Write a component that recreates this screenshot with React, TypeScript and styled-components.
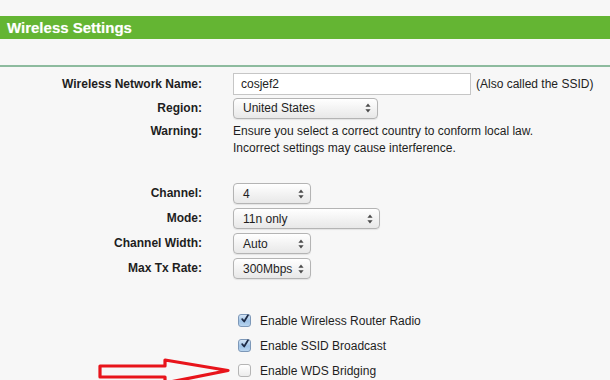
import styled, { createGlobalStyle } from "styled-components";

const GlobalStyle = createGlobalStyle`
  html, body {
    margin: 0;
    padding: 0;
    background: #f7f7f7;
    overflow: hidden;
  }
  body {
    font-family: "Liberation Sans", Arial, Helvetica, sans-serif;
    color: #1c1c1c;
  }
`;

type SelectField = {
  label: string;
  value: string;
  width: number;
};

const radioSelects: SelectField[] = [
  { label: "Channel:", value: "4", width: 78 },
  { label: "Mode:", value: "11n only", width: 147 },
  { label: "Channel Width:", value: "Auto", width: 78 },
  { label: "Max Tx Rate:", value: "300Mbps", width: 78 },
];

const checks = [
  { title: "Enable Wireless Router Radio", checked: true },
  { title: "Enable SSID Broadcast", checked: true },
  { title: "Enable WDS Bridging", checked: false },
];

function Select({ value, width }: { value: string; width: number }) {
  return (
    <StyledSelect $width={width}>
      <span>{value}</span>
      <svg width="6" height="10" viewBox="0 0 6 10">
        <path d="M3 0.5 L5.6 3.8 L0.4 3.8 Z" fill="#4a4a4a" />
        <path d="M3 9.5 L5.6 6.2 L0.4 6.2 Z" fill="#4a4a4a" />
      </svg>
    </StyledSelect>
  );
}

function Checkbox({ checked }: { checked: boolean }) {
  return (
    <StyledCheck $checked={checked}>
      {checked && (
        <svg width="12" height="12" viewBox="0 0 12 12">
          <path
            d="M2.6 6.2 L5 9 L9.6 1.6"
            fill="none"
            stroke="#1d2a44"
            strokeWidth="2.1"
            strokeLinecap="round"
            strokeLinejoin="round"
          />
        </svg>
      )}
    </StyledCheck>
  );
}

export default function App() {
  return (
    <Page>
      <GlobalStyle />
      <Header>Wireless Settings</Header>
      <Separator />
      <Form>
        <Row $height={22} $top={6}>
          <Label>Wireless Network Name:</Label>
          <Value>
            <TextInput>cosjef2</TextInput>
            <Hint>(Also called the SSID)</Hint>
          </Value>
        </Row>
        <Row $height={22} $top={2}>
          <Label>Region:</Label>
          <Value>
            <Select value="United States" width={145} />
          </Value>
        </Row>
        <Row $height={34} $top={4} $start>
          <Label>Warning:</Label>
          <Warning>
            Ensure you select a correct country to conform local law.
            <br />
            Incorrect settings may cause interference.
          </Warning>
        </Row>
        {radioSelects.map((f, i) => (
          <Row key={f.label} $height={21} $top={i === 0 ? 26 : 4}>
            <Label>{f.label}</Label>
            <Value>
              <Select value={f.value} width={f.width} />
            </Value>
          </Row>
        ))}
        {checks.map((c, i) => (
          <Row key={c.title} $height={25} $top={i === 0 ? 29 : 0}>
            <span />
            <Value>
              <Checkbox checked={c.checked} />
              <CheckText>{c.title}</CheckText>
            </Value>
          </Row>
        ))}
      </Form>
      <Arrow width="140" height="30" viewBox="0 0 140 30">
        <path
          d="M2 10 L67 10 L67 4 L130 14.5 L67 27 L67 21 L2 21 Z"
          fill="none"
          stroke="#e8141b"
          strokeWidth="3.2"
          strokeLinejoin="round"
        />
      </Arrow>
    </Page>
  );
}

const Page = styled.div`
  position: relative;
  width: 610px;
  height: 380px;
  padding-top: 16px;
  box-sizing: border-box;
`;

const Header = styled.div`
  height: 23px;
  background: #64b533;
  color: #ffffff;
  font-size: 15px;
  font-weight: bold;
  line-height: 23px;
  padding-left: 7px;
  text-shadow: 0 0 1px rgba(255, 255, 255, 0.4);
`;

const Separator = styled.div`
  margin-top: 26px;
  height: 2px;
  background: #8dbb9e;
`;

const Form = styled.div`
  display: flex;
  flex-direction: column;
`;

const Row = styled.div<{ $height: number; $top: number; $start?: boolean }>`
  display: grid;
  grid-template-columns: 202px 1fr;
  column-gap: 31px;
  align-items: ${({ $start }) => ($start ? "start" : "center")};
  height: ${({ $height }) => $height}px;
  margin-top: ${({ $top }) => $top}px;
`;

const Label = styled.div`
  text-align: right;
  font-size: 12px;
  font-weight: bold;
  line-height: 17px;
  color: #1e1e1e;
`;

const Value = styled.div`
  display: flex;
  align-items: center;
  gap: 5px;
  font-size: 12px;
`;

const TextInput = styled.div`
  box-sizing: border-box;
  width: 238px;
  height: 22px;
  border: 1px solid #c6c6c6;
  background: #ffffff;
  padding-left: 7px;
  font-size: 12px;
  line-height: 20px;
  color: #222;
`;

const Hint = styled.span`
  font-size: 12px;
  color: #222;
`;

const StyledSelect = styled.div<{ $width: number }>`
  box-sizing: border-box;
  width: ${({ $width }) => $width}px;
  height: 21px;
  display: flex;
  align-items: center;
  justify-content: space-between;
  padding: 0 6px 0 9px;
  border: 1px solid #b4b4b4;
  border-radius: 4px;
  background: linear-gradient(#ffffff, #f1f1f1 60%, #e8e8e8);
  box-shadow: 0 1px 1px rgba(0, 0, 0, 0.08);
  font-size: 12px;
  color: #1e1e1e;
`;

const Warning = styled.div`
  font-size: 12px;
  line-height: 17px;
  color: #1e1e1e;
`;

const StyledCheck = styled.span<{ $checked: boolean }>`
  box-sizing: border-box;
  width: 13px;
  height: 13px;
  margin-left: 5px;
  margin-right: 4px;
  border-radius: 3px;
  border: 1px solid ${({ $checked }) => ($checked ? "#7d98b8" : "#b5b5b5")};
  background: ${({ $checked }) =>
    $checked
      ? "linear-gradient(#d6e6f6, #9ec2e6 55%, #b9d5ef)"
      : "linear-gradient(#ffffff, #ececec)"};
  display: flex;
  align-items: center;
  justify-content: center;
  overflow: visible;
  svg {
    margin-top: -3px;
    margin-left: 1px;
  }
`;

const CheckText = styled.span`
  font-size: 12px;
  color: #1e1e1e;
`;

const Arrow = styled.svg`
  position: absolute;
  left: 98px;
  top: 356px;
`;
